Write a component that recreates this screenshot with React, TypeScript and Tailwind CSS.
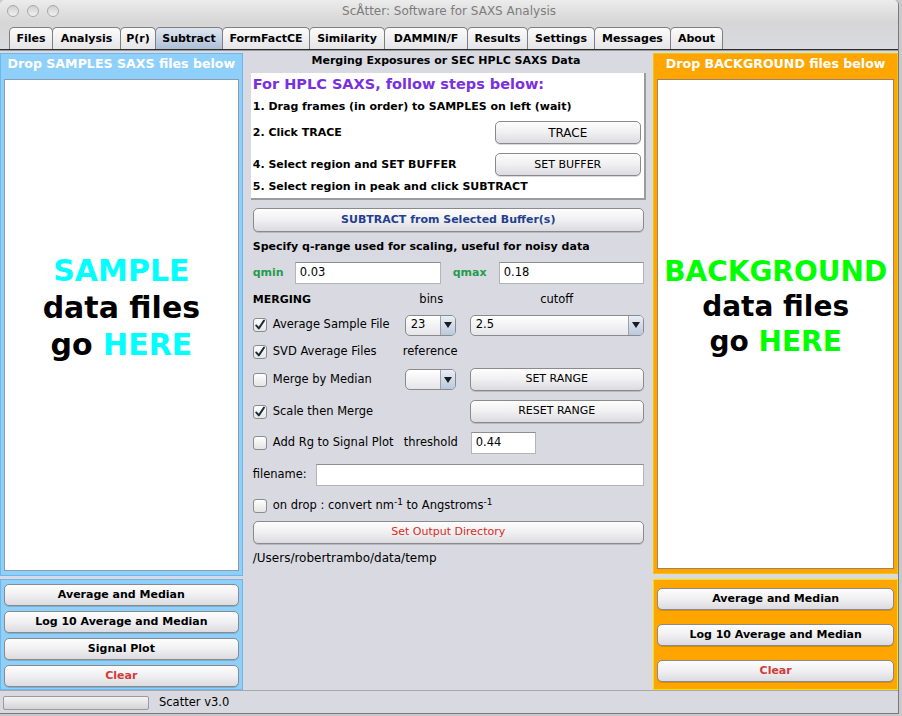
import React from "react";

const ui = "font-['DejaVu_Sans',sans-serif]";
const big = "font-['DejaVu_Sans',sans-serif] font-bold";

const tabs: [string, string][] = [
  ["Files", "w-[44px]"],
  ["Analysis", "w-[69px]"],
  ["P(r)", "w-[36px]"],
  ["Subtract", "w-[68px]"],
  ["FormFactCE", "w-[88px]"],
  ["Similarity", "w-[76px]"],
  ["DAMMIN/F", "w-[84px]"],
  ["Results", "w-[61px]"],
  ["Settings", "w-[68px]"],
  ["Messages", "w-[77px]"],
  ["About", "w-[53px]"],
];

const Btn = ({
  children,
  className = "",
}: {
  children: React.ReactNode;
  className?: string;
}) => (
  <div
    className={`flex items-center justify-center rounded-[5px] border border-[#8a8a8a] bg-gradient-to-b from-[#fdfdfd] via-[#f0f0f2] to-[#dcdce0] shadow-[0_1px_0_rgba(0,0,0,0.15)] text-[11px] ${className}`}
  >
    {children}
  </div>
);

const Check = ({ on }: { on?: boolean }) => (
  <div className="w-[14px] h-[14px] rounded-[3px] border border-[#8c8c8c] bg-gradient-to-b from-white to-[#e4e4e4] flex items-center justify-center shrink-0">
    {on && (
      <svg width="12" height="12" viewBox="0 0 12 12">
        <path d="M2.2 6.4 L4.8 9.4 L10 1.6" fill="none" stroke="#1b2a3a" strokeWidth="1.9" strokeLinecap="round" strokeLinejoin="round" />
      </svg>
    )}
  </div>
);

const Combo = ({ value, className = "" }: { value?: string; className?: string }) => (
  <div className={`flex h-[21px] rounded-[5px] border border-[#8a8a8a] bg-gradient-to-b from-white to-[#e6e6ea] overflow-hidden ${className}`}>
    <div className="flex-1 pl-[5px] flex items-center text-[11.5px]">{value}</div>
    <div className="w-[15px] border-l border-[#a0a0a8] bg-gradient-to-b from-[#e9eef6] to-[#b9c9dd] flex items-center justify-center">
      <svg width="8" height="6" viewBox="0 0 8 6">
        <path d="M0 0 H8 L4 6 Z" fill="#1c1c1c" />
      </svg>
    </div>
  </div>
);

const Field = ({ value, className = "" }: { value?: string; className?: string }) => (
  <div className={`h-[22px] bg-white border border-[#b4b4b4] border-t-[#8e8e8e] flex items-center pl-[4px] text-[11.5px] ${className}`}>
    {value}
  </div>
);

export default function App() {
  return (
    <div className={`w-[902px] h-[716px] bg-[#c9c9cc] ${ui} text-black overflow-hidden`}>
      <div className="w-[899px] h-[714px] bg-[#d9dae1] border-r border-b border-[#7a7a7a] flex flex-col rounded-t-[5px] overflow-hidden">
        {/* title bar */}
        <div className="h-[22px] bg-gradient-to-b from-[#ececec] to-[#d6d6d6] flex items-center relative shrink-0">
          <div className="flex gap-[8px] pl-[7px]">
            <div className="w-[12px] h-[12px] rounded-full border border-[#a8a8a8] bg-gradient-to-b from-[#d0d0d0] to-[#f2f2f2]" />
            <div className="w-[12px] h-[12px] rounded-full border border-[#a8a8a8] bg-gradient-to-b from-[#d0d0d0] to-[#f2f2f2]" />
            <div className="w-[12px] h-[12px] rounded-full border border-[#a8a8a8] bg-gradient-to-b from-[#d0d0d0] to-[#f2f2f2]" />
          </div>
          <div className="absolute inset-0 flex items-center justify-center text-[12px] text-[#7c7c7c]">
            ScÅtter: Software for SAXS Analysis
          </div>
        </div>

        {/* tab strip */}
        <div className="h-[27px] bg-gradient-to-b from-[#d6d6d6] to-[#dadbe1] flex items-end pl-[9px] shrink-0">
          {tabs.map(([t, w]) => (
            <div
              key={t}
              className={`${w} h-[22px] -mr-px rounded-t-[5px] border border-b-0 border-[#7f7f7f] flex items-center justify-center text-[11px] font-bold pt-px ${
                t === "Subtract"
                  ? "bg-gradient-to-b from-[#dfe7f2] to-[#adbfd6]"
                  : "bg-gradient-to-b from-[#fbfbfb] to-[#e5e5e8]"
              }`}
            >
              {t}
            </div>
          ))}
        </div>
        <div className="h-[2px] bg-[#2e2e2e] border-b border-[#9a9a9a] shrink-0" />

        {/* content */}
        <div className="flex h-[639px] shrink-0 pt-[2px]">
          {/* left column */}
          <div className="w-[243px] flex flex-col">
            <div className="h-[523px] bg-[#8fd0fb] border border-[#6fb6ec] flex flex-col px-[3px] pb-[4px]">
              <div className="h-[25px] pb-[5px] flex items-center justify-center text-white font-bold text-[12.6px]">
                Drop SAMPLES SAXS files below
              </div>
              <div className="flex-1 bg-white border border-[#8a9db0] flex flex-col items-center justify-center pb-[35px]">
                <div className={`${big} text-[30px] leading-[37px] text-center`}>
                  <div className="text-[#00ffff]">SAMPLE</div>
                  <div>data files</div>
                  <div>
                    go <span className="text-[#00ffff]">HERE</span>
                  </div>
                </div>
              </div>
            </div>
            <div className="mt-[3px] h-[111px] bg-[#8fd0fb] border border-[#6fb6ec] px-[3px] pt-[4px] flex flex-col gap-[5px]">
              <Btn className="h-[22px] font-bold">Average and Median</Btn>
              <Btn className="h-[22px] font-bold">Log 10 Average and Median</Btn>
              <Btn className="h-[22px] font-bold">Signal Plot</Btn>
              <Btn className="h-[22px] font-bold text-[#d23b3b]">Clear</Btn>
            </div>
          </div>

          {/* middle column */}
          <div className="w-[411px] pl-[10px] flex flex-col text-[11.5px]">
            <div className="h-[16px] flex items-center justify-center font-bold text-[11px] pr-[14px]">
              Merging Exposures or SEC HPLC SAXS Data
            </div>
            <div className="mt-[4px] -ml-[2px] w-[395px] h-[127px] bg-white border-r-2 border-b-2 border-[#9c9c9c] flex flex-col pl-[2px] font-bold text-[11px]">
              <div className="h-[24px] flex items-center text-[14.5px] text-[#7a2fe0]">
                For HPLC SAXS, follow steps below:
              </div>
              <div className="h-[22px] flex items-center">1. Drag frames (in order) to SAMPLES on left (wait)</div>
              <div className="mt-[3px] h-[23px] flex items-center justify-between pr-[3px]">
                <span>2. Click TRACE</span>
                <Btn className="w-[146px] h-[23px] font-normal text-[12px]">TRACE</Btn>
              </div>
              <div className="mt-[9px] h-[23px] flex items-center justify-between pr-[3px]">
                <span>4. Select region and SET BUFFER</span>
                <Btn className="w-[146px] h-[23px] font-normal text-[11.5px]">SET BUFFER</Btn>
              </div>
              <div className="h-[22px] flex items-center">5. Select region in peak and click SUBTRACT</div>
            </div>

            <Btn className="mt-[8px] w-[391px] h-[24px] font-bold text-[#233f8e]">SUBTRACT from Selected Buffer(s)</Btn>

            <div className="mt-[7px] h-[16px] flex items-center font-bold text-[11px]">
              Specify q-range used for scaling, useful for noisy data
            </div>

            <div className="mt-[7px] h-[22px] flex items-center">
              <span className="w-[42px] font-bold text-[11px] text-[#239c4e]">qmin</span>
              <Field value="0.03" className="w-[146px]" />
              <span className="ml-[12px] w-[46px] font-bold text-[11px] text-[#239c4e]">qmax</span>
              <Field value="0.18" className="w-[145px]" />
            </div>

            <div className="mt-[8px] h-[16px] flex items-center">
              <span className="w-[152px] font-bold text-[11px]">MERGING</span>
              <span className="w-[65px] text-center pr-[12px]">bins</span>
              <span className="w-[174px] text-center">cutoff</span>
            </div>

            <div className="mt-[6px] h-[22px] flex items-center">
              <div className="w-[152px] flex items-center gap-[6px]">
                <Check on />
                <span>Average Sample File</span>
              </div>
              <Combo value="23" className="w-[51px]" />
              <Combo value="2.5" className="ml-[14px] w-[174px]" />
            </div>

            <div className="mt-[6px] h-[20px] flex items-center">
              <div className="w-[150px] flex items-center gap-[6px]">
                <Check on />
                <span>SVD Average Files</span>
              </div>
              <span>reference</span>
            </div>

            <div className="mt-[6px] h-[23px] flex items-center">
              <div className="w-[152px] flex items-center gap-[6px]">
                <Check />
                <span>Merge by Median</span>
              </div>
              <Combo className="w-[51px]" />
              <Btn className="ml-[14px] w-[174px] h-[23px] text-[11.5px]">SET RANGE</Btn>
            </div>

            <div className="mt-[9px] h-[23px] flex items-center">
              <div className="w-[217px] flex items-center gap-[6px]">
                <Check on />
                <span>Scale then Merge</span>
              </div>
              <Btn className="w-[174px] h-[23px] text-[11.5px]">RESET RANGE</Btn>
            </div>

            <div className="mt-[9px] h-[22px] flex items-center">
              <div className="w-[151px] flex items-center gap-[6px]">
                <Check />
                <span>Add Rg to Signal Plot</span>
              </div>
              <span className="w-[67px]">threshold</span>
              <Field value="0.44" className="w-[65px]" />
            </div>

            <div className="mt-[10px] h-[22px] flex items-center">
              <span className="w-[63px]">filename:</span>
              <Field className="w-[328px]" />
            </div>

            <div className="mt-[11px] h-[18px] flex items-center gap-[6px]">
              <Check />
              <span>
                on drop : convert nm<sup className="text-[9px]">-1</sup> to Angstroms<sup className="text-[9px]">-1</sup>
              </span>
            </div>

            <Btn className="mt-[6px] w-[391px] h-[23px] text-[#d92b1f] text-[11.5px]">Set Output Directory</Btn>

            <div className="mt-[6px] h-[16px] flex items-center text-[12px]">/Users/robertrambo/data/temp</div>
          </div>

          {/* right column */}
          <div className="w-[245px] flex flex-col">
            <div className="h-[522px] bg-[#ffa500] border border-[#f5c400] flex flex-col px-[3px] pb-[4px]">
              <div className="h-[25px] pb-[5px] flex items-center justify-center text-white font-bold text-[12.6px]">
                Drop BACKGROUND files below
              </div>
              <div className="flex-1 bg-white border border-[#a08060] flex flex-col items-center justify-center pb-[36px]">
                <div className={`${big} text-[28px] leading-[35px] text-center`}>
                  <div className="text-[#00ff00]">BACKGROUND</div>
                  <div>data files</div>
                  <div>
                    go <span className="text-[#00ff00]">HERE</span>
                  </div>
                </div>
              </div>
            </div>
            <div className="mt-[5px] h-[111px] bg-[#ffa500] border border-[#f5e000] px-[3px] pt-[8px] flex flex-col gap-[14px]">
              <Btn className="h-[22px] font-bold">Average and Median</Btn>
              <Btn className="h-[22px] font-bold">Log 10 Average and Median</Btn>
              <Btn className="h-[22px] font-bold text-[#d23b3b]">Clear</Btn>
            </div>
          </div>
        </div>

        {/* status bar */}
        <div className="flex-1 border-t border-[#a9a9ad] flex items-center pl-[3px] pt-[2px] gap-[10px]">
          <div className="w-[146px] h-[14px] border border-[#9a9a9a] bg-gradient-to-b from-[#f4f4f4] to-[#d4d4d6] rounded-[2px]" />
          <span className="text-[11.5px]">Scatter v3.0</span>
        </div>
      </div>
    </div>
  );
}
